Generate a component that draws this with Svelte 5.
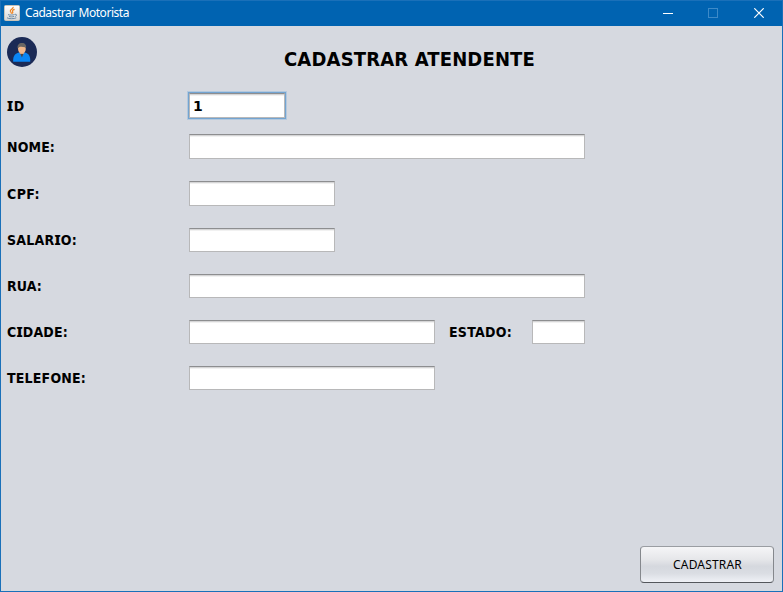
<script>
  const rows = [
    { label: 'ID', width: 96, height: 25, gap: 0, value: '1', focus: true, text: 18 },
    { label: 'NOME:', width: 396, height: 25, gap: 16, text: 48 },
    { label: 'CPF:', width: 146, height: 25, gap: 22, text: 33 },
    { label: 'SALARIO:', width: 146, height: 24, gap: 22, text: 70 },
    { label: 'RUA:', width: 396, height: 24, gap: 22, text: 35 },
    { label: 'CIDADE:', width: 246, height: 24, gap: 22, text: 61, extra: true },
    { label: 'TELEFONE:', width: 246, height: 24, gap: 22, text: 79 }
  ];

  // Spreads the letters so that the text takes the given width.
  function fit(node, width) {
    const range = document.createRange();
    range.selectNodeContents(node);
    const natural = range.getBoundingClientRect().width;
    node.style.letterSpacing = `${(width - natural) / node.textContent.length}px`;
  }
</script>

<div class="window">
  <header>
    <svg class="java" width="16" height="16" viewBox="0 0 16 16">
      <defs>
        <linearGradient id="tile" x1="0" y1="0" x2="0" y2="1">
          <stop offset="0" stop-color="#fff" /><stop offset="1" stop-color="#d5d5d5" />
        </linearGradient>
      </defs>
      <rect x=".5" y=".5" width="15" height="15" rx="1" fill="url(#tile)" stroke="#c9c3b8" />
      <path d="M9.2 1.8C9.6 3.8 5.9 4.6 6.3 6.2C6.6 7.2 7.8 7.5 7.3 8.8M10.6 4.4C8.4 5.1 8.2 5.9 8.7 6.7C9.1 7.5 8.7 8 8.2 8.5" fill="none" stroke="#ee8420" stroke-width="1.2" />
      <path d="M4 9.6C5 10.3 9.5 10.1 10.5 9.5M5 11.4C6.3 12 8.5 12 10 11.4M10.8 9.3C13.4 8.9 13 11 10.8 11.6M3 12.8C4.5 14 10.4 14 12.3 12.8" fill="none" stroke="#64839f" stroke-width=".9" />
    </svg>
    <span class="caption" use:fit={104}>Cadastrar Motorista</span>
    <div class="controls">
      <svg width="10" height="10" viewBox="0 0 10 10"><path d="M0 5.5H10" stroke="#fff" /></svg>
      <svg width="10" height="10" viewBox="0 0 10 10"><rect x=".5" y=".5" width="9" height="9" fill="none" stroke="#3d8ac8" /></svg>
      <svg width="10" height="10" viewBox="0 0 10 10"><path d="M.3 .3L9.7 9.7M9.7 .3L.3 9.7" stroke="#fff" stroke-width="1.2" /></svg>
    </div>
  </header>

  <main>
    <div class="top">
      <svg class="avatar" width="30" height="30" viewBox="0 0 30 30">
        <circle cx="15" cy="15" r="15" fill="#1b2a56" />
        <path d="M6.2 24.8C5.8 20 7.4 16.6 12 15.6H17.8C22.2 16.6 23.6 20 23.2 24.8Z" fill="#0a86f5" />
        <path d="M12.6 13.4H17.2L17.4 16L15 18.6L12.4 16Z" fill="#dba279" />
        <path d="M13.4 17H16.4L14.9 20.6Z" fill="#4d4547" />
        <ellipse cx="14.9" cy="11.8" rx="3.9" ry="4.2" fill="#f1b78b" />
        <path d="M10.7 11.4C10 8 12 6 15 6C18 6 19.7 8 19 11.4L18 10.2C16 10 14 9.4 12 10.2Z" fill="#6a6664" />
      </svg>
      <h1><span use:fit={251}>CADASTRAR ATENDENTE</span></h1>
    </div>

    <form>
      {#each rows as row}
        <div class="row" style:height="{row.height}px" style:margin-top="{row.gap}px">
          <div class="label"><span use:fit={row.text}>{#each row.label as letter}{#if letter === 'I'}<b class="serif-i">I</b>{:else}{letter}{/if}{/each}</span></div>
          <div class="field" class:focus={row.focus} style:width="{row.width}px">{row.value ?? ''}</div>
          {#if row.extra}
            <div class="label state"><span use:fit={63}>ESTADO:</span></div>
            <div class="field small"></div>
          {/if}
        </div>
      {/each}
    </form>

    <button type="button"><span use:fit={69}>CADASTRAR</span></button>
  </main>
</div>

<style>
  .window {
    box-sizing: border-box;
    width: 783px;
    height: 592px;
    display: flex;
    flex-direction: column;
    border: 1px solid #1a70b9;
    background: #d6d9e0;
    color: #000;
    font-family: "Noto Sans", "Open Sans", sans-serif;
    overflow: hidden;
  }
  header {
    height: 25px;
    flex: none;
    display: flex;
    align-items: center;
    background: #0063b1;
    color: #fff;
  }
  .java { margin-left: 3px; margin-top: -1px; }
  .caption {
    margin-left: 5px;
    margin-top: -1px;
    font-size: 12px;
    line-height: 16px;
    white-space: nowrap;
  }
  .controls {
    margin-left: auto;
    margin-right: 18px;
    margin-top: -1px;
    display: flex;
    gap: 36px;
  }
  .controls svg:first-child { margin-right: -1px; }
  svg { display: block; flex: none; }
  main {
    flex: 1;
    display: flex;
    flex-direction: column;
  }
  .top {
    display: flex;
    height: 67px;
    padding-left: 6px;
    box-sizing: border-box;
  }
  .avatar { margin-top: 11px; }
  h1 {
    margin: 19px 0 0 247px;
    font-family: "DejaVu Sans Condensed", "DejaVu Sans", sans-serif;
    font-stretch: condensed;
    font-size: 20px;
    line-height: 28px;
    font-weight: 700;
    white-space: nowrap;
  }
  .row {
    display: flex;
    align-items: center;
    padding-left: 6px;
  }
  .label {
    width: 182px;
    font-family: "DejaVu Sans Condensed", "DejaVu Sans", sans-serif;
    font-stretch: condensed;
    font-size: 14px;
    line-height: 20px;
    font-weight: 700;
    white-space: nowrap;
  }
  .serif-i {
    font-family: "Noto Sans", "Open Sans", sans-serif;
    font-stretch: normal;
    line-height: 1;
  }
  .state {
    width: 83px;
    margin-left: 14px;
  }
  .field {
    box-sizing: border-box;
    height: 100%;
    padding-left: 3px;
    border: 1px solid #b8b8b9;
    border-top-color: #8d8e90;
    background: linear-gradient(#d5d5d6 0 1px, #f1f1f1 1px 2px, #fff 2px);
    font-family: "DejaVu Sans", sans-serif;
    font-size: 14px;
    font-weight: 700;
    line-height: 25px;
  }
  .small { width: 53px; }
  .focus {
    box-shadow: 0 0 0 1px #73a4d1, 0 0 0 2px #b4c9de;
  }
  button {
    box-sizing: border-box;
    width: 134px;
    height: 37px;
    margin: auto 8px 8px auto;
    padding: 0 0 0 1px;
    border: 1px solid;
    border-color: #9a9da2 #85888d #54575c;
    border-radius: 4px;
    background: linear-gradient(#f5f5f7, #e6e7ea 35%, #d5d8de 55%, #dadde3 75%, #eff1f6);
    color: #000;
    font: 12px/18px "Noto Sans", "Open Sans", sans-serif;
    white-space: nowrap;
  }
</style>
